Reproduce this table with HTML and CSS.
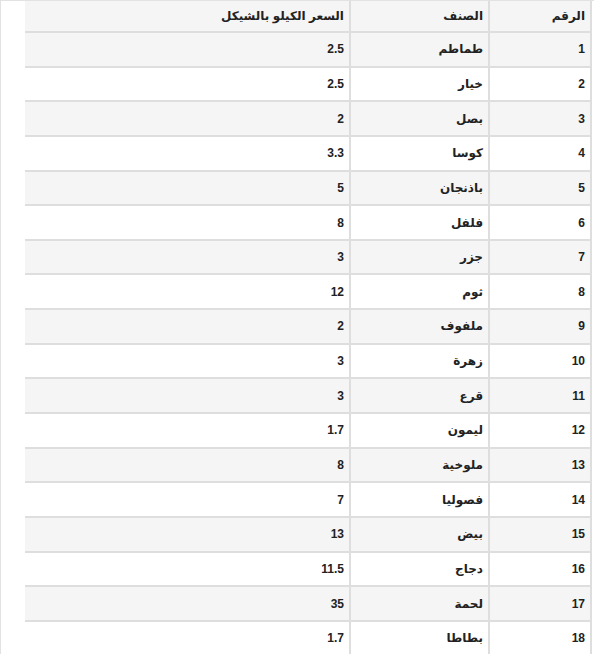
FILE: index.html
```html
<!DOCTYPE html>
<html lang="ar" dir="rtl">
<head>
<meta charset="utf-8">
<title>أسعار الخضار</title>
<link rel="stylesheet" href="styles.css">
</head>
<body>
<div class="frame">
<table class="prices">
<colgroup><col class="c-num"><col class="c-item"><col class="c-price"></colgroup>
<thead>
<tr><th>الرقم</th><th>الصنف</th><th>السعر الكيلو بالشيكل</th></tr>
</thead>
<tbody>
<tr><td>1</td><td>طماطم</td><td>2.5</td></tr>
<tr><td>2</td><td>خيار</td><td>2.5</td></tr>
<tr><td>3</td><td>بصل</td><td>2</td></tr>
<tr><td>4</td><td>كوسا</td><td>3.3</td></tr>
<tr><td>5</td><td>باذنجان</td><td>5</td></tr>
<tr><td>6</td><td>فلفل</td><td>8</td></tr>
<tr><td>7</td><td>جزر</td><td>3</td></tr>
<tr><td>8</td><td>ثوم</td><td>12</td></tr>
<tr><td>9</td><td>ملفوف</td><td>2</td></tr>
<tr><td>10</td><td>زهرة</td><td>3</td></tr>
<tr><td>11</td><td>قرع</td><td>3</td></tr>
<tr><td>12</td><td>ليمون</td><td>1.7</td></tr>
<tr><td>13</td><td>ملوخية</td><td>8</td></tr>
<tr><td>14</td><td>فصوليا</td><td>7</td></tr>
<tr><td>15</td><td>بيض</td><td>13</td></tr>
<tr><td>16</td><td>دجاج</td><td>11.5</td></tr>
<tr><td>17</td><td>لحمة</td><td>35</td></tr>
<tr><td>18</td><td>بطاطا</td><td>1.7</td></tr>
</tbody>
</table>
</div>
</body>
</html>
```
FILE: styles.css
```css
html, body {
  margin: 0;
  padding: 0;
  background: #fff;
}
body {
  width: 594px;
  height: 654px;
  overflow: hidden;
  font-family: "Liberation Sans", "DejaVu Sans", sans-serif;
  font-size: 12px;
  font-weight: bold;
  color: #222;
}
.frame {
  direction: ltr;
  box-sizing: border-box;
  width: 594px;
  height: 654px;
  overflow: hidden;
  border-top: 1px solid #e2e2e2;
  border-left: 1px solid #e2e2e2;
  padding-left: 24px;
}
.prices {
  direction: rtl;
  border-collapse: separate;
  border-spacing: 0;
  table-layout: fixed;
  width: 567px;
}
.c-num { width: 102px; }
.c-item { width: 139px; }
.c-price { width: 326px; }
.prices th,
.prices td {
  box-sizing: border-box;
  padding: 0 5px;
  text-align: right;
  vertical-align: middle;
  border-right: 2px solid #dedede;
  border-bottom: 2px solid #dedede;
  font-weight: bold;
  white-space: nowrap;
}
.prices th {
  height: 32px;
  background: #f5f5f5;
}
.prices td {
  height: 34.65px;
}
.prices tbody tr:nth-child(odd) td {
  background: #f5f5f5;
}
```
